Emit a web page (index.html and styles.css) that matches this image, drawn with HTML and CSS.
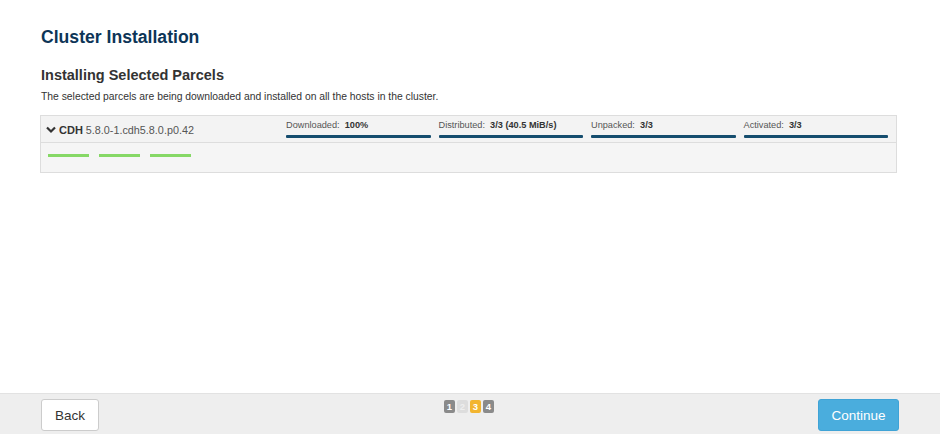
FILE: index.html
```html
<!DOCTYPE html>
<html>
<head>
<meta charset="utf-8">
<link rel="stylesheet" href="styles.css">
</head>
<body>
<div class="page">
  <main class="content">
    <h1 class="title">Cluster Installation</h1>
    <h2 class="subtitle">Installing Selected Parcels</h2>
    <p class="desc">The selected parcels are being downloaded and installed on all the hosts in the cluster.</p>
    <div class="panel">
      <div class="panel-head">
        <div class="parcel-name">
          <svg class="chev" width="10" height="8" viewBox="0 0 10 8"><path d="M1 1.5 L5 5.5 L9 1.5" fill="none" stroke="#333" stroke-width="2.2"/></svg>
          <b>CDH</b><span class="ver">5.8.0-1.cdh5.8.0.p0.42</span>
        </div>
        <div class="stages">
          <div class="stage"><div class="stage-label">Downloaded:&nbsp; <b>100%</b></div><div class="bar"></div></div>
          <div class="stage"><div class="stage-label">Distributed:&nbsp; <b>3/3 (40.5 MiB/s)</b></div><div class="bar"></div></div>
          <div class="stage"><div class="stage-label">Unpacked:&nbsp; <b>3/3</b></div><div class="bar"></div></div>
          <div class="stage"><div class="stage-label">Activated:&nbsp; <b>3/3</b></div><div class="bar"></div></div>
        </div>
      </div>
      <div class="panel-body">
        <span class="host"></span><span class="host"></span><span class="host"></span>
      </div>
    </div>
  </main>
  <footer class="footer">
    <div class="foot-left"><button class="btn btn-back">Back</button></div>
    <div class="pager">
      <span class="step done">1</span><span class="step off">2</span><span class="step cur">3</span><span class="step done">4</span>
    </div>
    <div class="foot-right"><button class="btn btn-primary">Continue</button></div>
  </footer>
</div>
</body>
</html>
```
FILE: styles.css
```css
* { box-sizing: border-box; }
html, body { margin: 0; padding: 0; background: #fff; }
body { font-family: "Liberation Sans", Arial, sans-serif; color: #333; }
.page { height: 434px; display: flex; flex-direction: column; }
.content { flex: 1; padding: 26px 43px 0 40px; }
.title { margin: 0 0 0 1px; font-size: 17.6px; font-weight: bold; color: #0d3557; line-height: 22px; }
.subtitle { margin: 18px 0 0 1px; font-size: 14.5px; font-weight: bold; color: #333; line-height: 18px; }
.desc { margin: 6px 0 0 1px; font-size: 10.35px; color: #333; line-height: 14px; }
.panel { margin-top: 11px; border: 1px solid #ddd; background: #f5f5f5; }
.panel-head { display: flex; align-items: stretch; height: 27px; border-bottom: 1px solid #ddd; background: #f3f3f3; padding-right: 8px; }
.parcel-name { width: 245px; display: flex; align-items: center; padding-left: 5px; font-size: 10.8px; color: #555; padding-top: 2px; }
.parcel-name b { color: #333; margin-left: 3px; margin-right: 3px; font-size: 11px; }
.chev { margin-top: -1px; }
.stages { flex: 1; display: flex; gap: 8px; }
.stage { flex: 1; display: flex; flex-direction: column; justify-content: flex-end; padding-bottom: 4px; }
.stage-label { font-size: 9.2px; color: #555; line-height: 11px; margin-bottom: 4px; }
.stage-label b { color: #333; }
.bar { height: 3px; background: #154d6e; border-radius: 1px; }
.panel-body { height: 29px; display: flex; gap: 10px; padding: 11px 0 0 7px; }
.host { width: 41px; height: 3px; background: #86d866; }
.footer { height: 41px; background: #eee; border-top: 1px solid #e2e2e2; display: grid; grid-template-columns: 1fr auto 1fr; align-items: start; padding: 5px 41px 0 41px; }
.foot-right { display: flex; justify-content: flex-end; }
.btn { font-family: "Liberation Sans", Arial, sans-serif; font-size: 13.5px; height: 32px; border-radius: 3px; cursor: pointer; }
.btn-back { width: 58px; background: #fff; border: 1px solid #ccc; color: #333; }
.btn-primary { width: 81px; background: #4aaddd; border: 1px solid #3fa3d6; color: #fff; }
.pager { display: flex; gap: 2px; margin-top: 1px; margin-left: -2px; }
.step { width: 11px; height: 13px; border-radius: 2px; font-size: 9.5px; font-weight: bold; color: #fff; display: flex; align-items: center; justify-content: center; }
.step.done { background: #8a8a8a; }
.step.off { background: #ddd; color: #eee; }
.step.cur { background: #f2b530; }
```
